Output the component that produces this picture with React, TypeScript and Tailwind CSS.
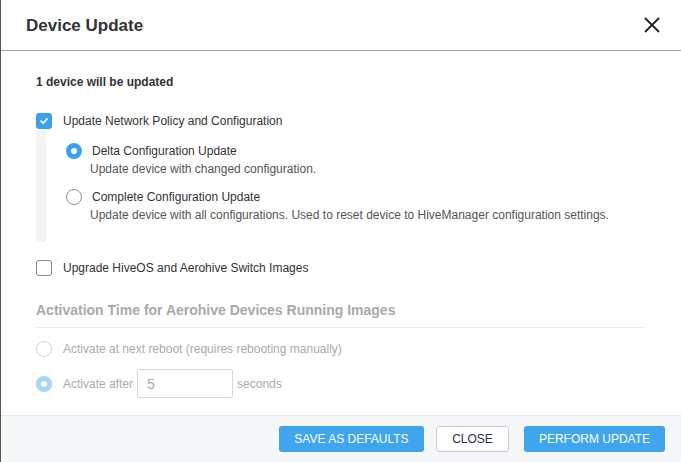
import React from "react";

function Checkbox({ checked }: { checked: boolean }) {
  if (checked) {
    return (
      <span className="w-4 h-4 rounded-[3px] bg-[#3ba1ee] flex items-center justify-center shrink-0">
        <svg width="10" height="10" viewBox="0 0 10 10">
          <path d="M2 5.2 L4.1 7.2 L8 3" stroke="#fff" strokeWidth="1.8" fill="none" strokeLinecap="round" strokeLinejoin="round" />
        </svg>
      </span>
    );
  }
  return <span className="w-4 h-4 rounded-[3px] border border-[#8a8a8a] bg-white shrink-0" />;
}

function Radio({ checked, disabled }: { checked: boolean; disabled?: boolean }) {
  if (checked) {
    return (
      <span
        className={
          disabled
            ? "w-4 h-4 rounded-full border-[5px] border-[#a5d3f6] bg-white shrink-0"
            : "w-4 h-4 rounded-full border-[5px] border-[#3ba1ee] bg-white shrink-0"
        }
      />
    );
  }
  return (
    <span
      className={
        disabled
          ? "w-4 h-4 rounded-full border border-[#d6d6d6] bg-white shrink-0"
          : "w-4 h-4 rounded-full border border-[#8f8f8f] bg-white shrink-0"
      }
    />
  );
}

export default function App() {
  return (
    <div className="w-[681px] h-[462px] flex flex-col bg-white border-l border-[#555] font-['Liberation_Sans',Arial,sans-serif] text-[#333]">
      <header className="h-[51px] shrink-0 border-b border-[#a3a3a3] flex items-center justify-between pl-[25px] pr-[21px]">
        <h1 className="text-[17px] font-bold text-[#333] leading-none">Device Update</h1>
        <svg width="16" height="16" viewBox="0 0 16 16">
          <path d="M1 1 L15 15 M15 1 L1 15" stroke="#222" strokeWidth="1.8" fill="none" />
        </svg>
      </header>

      <main className="flex-1 pl-[35px] pr-[35px] pt-[23px] text-[12px] leading-4">
        <p className="font-bold">1 device will be updated</p>

        <div className="mt-[23px] h-4 flex items-center gap-[11px]">
          <Checkbox checked />
          <span>Update Network Policy and Configuration</span>
        </div>

        <div className="mt-px border-l-[10px] border-[#f4f4f4] pl-[20px] pt-[13px] pb-[19px]">
          <div className="h-4 flex items-center gap-[10px]">
            <Radio checked />
            <span>Delta Configuration Update</span>
          </div>
          <p className="mt-[2px] pl-[24px] text-[#555]">Update device with changed configuration.</p>
          <div className="mt-[12px] h-4 flex items-center gap-[10px]">
            <Radio checked={false} />
            <span>Complete Configuration Update</span>
          </div>
          <p className="mt-[2px] pl-[24px] text-[#555]">
            Update device with all configurations. Used to reset device to HiveManager configuration settings.
          </p>
        </div>

        <div className="mt-[18px] h-4 flex items-center gap-[11px]">
          <Checkbox checked={false} />
          <span>Upgrade HiveOS and Aerohive Switch Images</span>
        </div>

        <h2 className="mt-[24px] mr-[1px] text-[14px] leading-5 font-bold text-[#a9a9a9] pb-[7px] border-b border-[#ebebeb]">
          Activation Time for Aerohive Devices Running Images
        </h2>

        <div className="mt-[13px] h-4 flex items-center gap-[11px] text-[#aaa]">
          <Radio checked={false} disabled />
          <span>Activate at next reboot (requires rebooting manually)</span>
        </div>

        <div className="mt-[12px] h-[29px] flex items-center text-[#aaa]">
          <Radio checked disabled />
          <span className="ml-[11px]">Activate after</span>
          <div className="ml-[4px] w-[96px] h-[29px] border border-[#d2d7df] rounded-[2px] flex items-center pl-[9px] text-[14px]">
            5
          </div>
          <span className="ml-[4px]">seconds</span>
        </div>
      </main>

      <footer className="h-[47px] shrink-0 border-t border-[#e6e8ee] bg-[#f6f7f9] flex items-center justify-end pr-4 text-[12px]">
        <button className="w-[145px] h-[26px] rounded-[3px] bg-[#3fa5ef] text-white">SAVE AS DEFAULTS</button>
        <button className="ml-[12px] w-[73px] h-[26px] rounded-[3px] bg-white border border-[#c9ced8] text-[#2a3040]">
          CLOSE
        </button>
        <button className="ml-[15px] w-[141px] h-[26px] rounded-[3px] bg-[#3fa5ef] text-white">PERFORM UPDATE</button>
      </footer>
    </div>
  );
}
